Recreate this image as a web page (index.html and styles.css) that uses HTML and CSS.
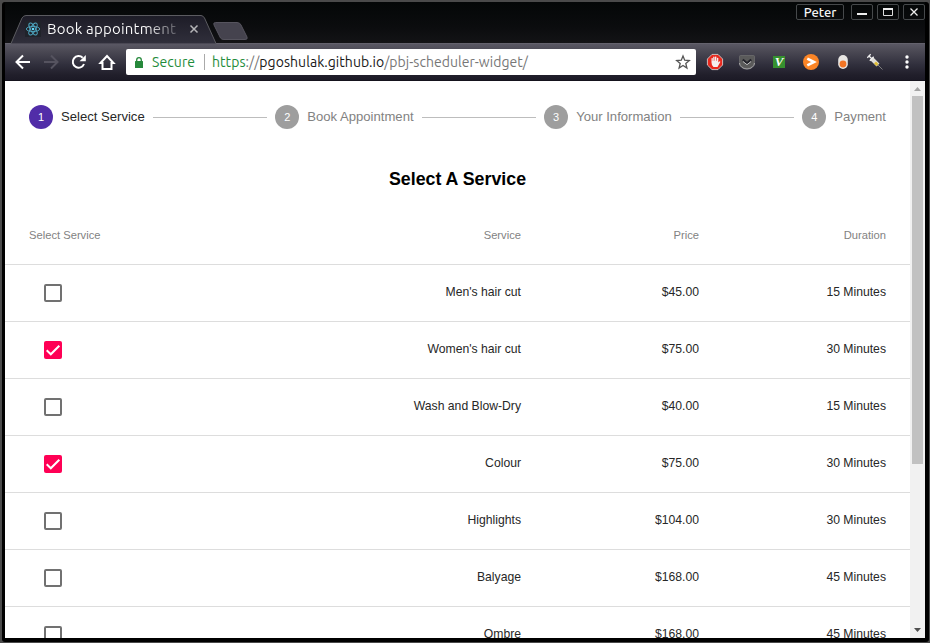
FILE: index.html
```html
<!DOCTYPE html>
<html lang="en">
<head>
<meta charset="utf-8">
<title>Book appointment</title>
<link rel="stylesheet" href="styles.css">
</head>
<body>
<div class="window">
  <header class="titlebar">
    <div class="tab">
      <svg class="tab-shape" width="240" height="29" viewBox="0 0 240 29"><defs><linearGradient id="tabfill" x1="0" y1="0" x2="0" y2="1"><stop offset="0" stop-color="#1d1c27"/><stop offset="1" stop-color="#302f3b"/></linearGradient></defs><path d="M5 28.500L16 3Q17.500 .5 20 .5H195Q197 .5 198.500 3L210 28.500" fill="url(#tabfill)" stroke="#5b5b60"/><path d="M209.500 7.500H231Q234 7.500 235 10L241 22Q242 24.500 239 24.500H218Q215.500 24.500 214.500 23L208 10Q207 7.500 209.500 7.500Z" fill="#45434e" stroke="#56545e"/></svg>
      <svg class="react" width="16" height="16" viewBox="0 0 16 16"><rect width="16" height="16" fill="#20232a"/><g fill="none" stroke="#4fa9c4" stroke-width=".9"><ellipse cx="8" cy="8" rx="6.700" ry="2.600"/><ellipse cx="8" cy="8" rx="6.700" ry="2.600" transform="rotate(60 8 8)"/><ellipse cx="8" cy="8" rx="6.700" ry="2.600" transform="rotate(120 8 8)"/></g><circle cx="8" cy="8" r="1.300" fill="#61dafb"/></svg>
      <span class="tab-title">Book appointment</span>
      <svg class="tab-close" width="8" height="8" viewBox="0 0 8 8"><path d="M.5.5l7 7M7.500.5l-7 7" stroke="#b5b5b8" stroke-width="1.500"/></svg>
    </div>
    <div class="controls">
      <span class="user">Peter</span>
      <span class="control"><svg width="20" height="14" viewBox="0 0 20 14"><path d="M5 9h10" stroke="#eee" stroke-width="2"/></svg></span>
      <span class="control"><svg width="20" height="14" viewBox="0 0 20 14"><path d="M5.500 4v6.500h9V4z" fill="none" stroke="#ddd"/><path d="M5 4h10" stroke="#eee" stroke-width="2"/></svg></span>
      <span class="control"><svg width="20" height="14" viewBox="0 0 20 14"><path d="M6.500 3.500l7 7M13.500 3.500l-7 7" stroke="#eee" stroke-width="1.300"/></svg></span>
    </div>
  </header>
  <nav class="toolbar">
    <svg class="nav-icons" width="121" height="38" viewBox="0 0 121 38" fill="none" stroke="#fff" stroke-width="2"><path d="M25 19H12.500M18 12.500L11.500 19L18 25.500"/><path stroke="#55535f" d="M39 19H51.500M46 12.500L52.500 19L46 25.500"/><path d="M79 21a5.800 5.800 0 1 1-1.300-6.200"/><path d="M80.800 12v6.200h-6.200z" fill="#fff" stroke="none"/><path d="M95.500 20L102 13L108.500 20H106.500V26H97.500V20Z"/></svg>
    <div class="address">
      <svg class="lock" width="8" height="11" viewBox="0 0 8 11"><rect y="4" width="8" height="7" rx=".5" fill="#26883b"/><path d="M1.700 5V3a2.300 2.300 0 0 1 4.600 0v2" fill="none" stroke="#26883b" stroke-width="1.300"/></svg>
      <span class="secure">Secure</span>
      <span class="url"><span class="scheme">https</span><span class="slashes">://</span><span class="host">pgoshulak.github.io</span>/pbj-scheduler-widget/</span>
      <svg class="star" width="14" height="14" viewBox="0 0 14 14"><path d="M7 1l1.700 4.200 4.600.3-3.500 3 1.100 4.500L7 10.500l-3.900 2.500 1.100-4.500-3.500-3 4.600-.3z" fill="none" stroke="#555" stroke-width="1.300"/></svg>
    </div>
    <div class="extensions">
      <svg width="16" height="16" viewBox="0 0 16 16"><path d="M5 .4h6L15.600 5v6L11 15.600H5L.4 11V5z" fill="#e8281d" stroke="#ddd" stroke-width=".8"/><path d="M4.500 8.500V4.300q.7-.8 1.300 0V7h.4V3q.7-.8 1.400 0v3.700H8V2.800q.8-.7 1.400 0v4H10V4q.7-.7 1.300 0v4.500l1-1q1-.4 1 .4L10.500 13H6.500q-2-1.500-2-4.500z" fill="#f4eeee"/></svg>
      <svg width="16" height="16" viewBox="0 0 16 16"><path d="M.5 2.500q0-1 1-1h13q1 0 1 1V8a7.500 6.500 0 0 1-15 0z" fill="#5a5a5a" stroke="#777" stroke-width=".6"/><path d="M.5 9a7.500 6 0 0 0 15 0" fill="none" stroke="#aaa"/><path d="M3.800 5.500l4.200 3.800 4.200-3.800" fill="none" stroke="#24242b" stroke-width="2.200"/><path d="M4 7.500l4 3.200 4-3.200" fill="none" stroke="#ccc" stroke-width=".9"/></svg>
      <svg width="16" height="16" viewBox="0 0 16 16"><rect x="2" y="2" width="12" height="12" fill="#36912f"/><text x="8.200" y="12" text-anchor="middle" class="vletter">V</text></svg>
      <svg width="16" height="16" viewBox="0 0 16 16"><circle cx="8" cy="8" r="8" fill="#fb8526"/><path d="M4.300 4.600L11 8l-6.700 3.400" fill="none" stroke="#fff" stroke-width="2.600"/></svg>
      <svg width="16" height="16" viewBox="0 0 16 16"><rect x="3.200" y="1" width="9.600" height="14" rx="4.800" fill="#e8e6e3"/><circle cx="8" cy="10" r="3.400" fill="#f27525"/></svg>
      <svg width="16" height="16" viewBox="0 0 16 16"><path d="M10.500 10.500l5 5" stroke="#888" stroke-width=".9"/><path d="M4.500 4.500l6.500 6.500" stroke="#deddd9" stroke-width="4"/><path d="M8 8.500l2.500 2.500" stroke="#dfbd35" stroke-width="2.800"/><path d="M1.500 1.500l3 3M.3 3.700L3.700.3M2.800 6.700L6.700 2.800" stroke="#f1f1f1" stroke-width="1.300"/></svg>
      <svg width="16" height="16" viewBox="0 0 16 16" fill="#fff"><circle cx="8" cy="3" r="1.700"/><circle cx="8" cy="8" r="1.700"/><circle cx="8" cy="13" r="1.700"/></svg>
    </div>
  </nav>
  <div class="viewport">
    <main class="page">
      <div class="stepper">
        <div class="step active"><span class="num">1</span><span>Select Service</span></div><i></i>
        <div class="step"><span class="num">2</span><span>Book Appointment</span></div><i></i>
        <div class="step"><span class="num">3</span><span>Your Information</span></div><i></i>
        <div class="step"><span class="num">4</span><span>Payment</span></div>
      </div>
      <h1>Select A Service</h1>
      <div class="table">
        <div class="row head"><span>Select Service</span><span>Service</span><span>Price</span><span>Duration</span></div>
        <div class="row"><span class="box"></span><span>Men's hair cut</span><span>$45.00</span><span>15 Minutes</span></div>
        <div class="row"><span class="box checked"><svg width="18" height="18" viewBox="0 0 18 18"><path d="M2.700 9.300L6.800 13.300L15.300 4.700" fill="none" stroke="#fff" stroke-width="2"/></svg></span><span>Women's hair cut</span><span>$75.00</span><span>30 Minutes</span></div>
        <div class="row"><span class="box"></span><span>Wash and Blow-Dry</span><span>$40.00</span><span>15 Minutes</span></div>
        <div class="row"><span class="box checked"><svg width="18" height="18" viewBox="0 0 18 18"><path d="M2.700 9.300L6.800 13.300L15.300 4.700" fill="none" stroke="#fff" stroke-width="2"/></svg></span><span>Colour</span><span>$75.00</span><span>30 Minutes</span></div>
        <div class="row"><span class="box"></span><span>Highlights</span><span>$104.00</span><span>30 Minutes</span></div>
        <div class="row"><span class="box"></span><span>Balyage</span><span>$168.00</span><span>45 Minutes</span></div>
        <div class="row"><span class="box"></span><span>Ombre</span><span>$168.00</span><span>45 Minutes</span></div>
      </div>
    </main>
    <div class="scrollbar">
      <svg width="15" height="15" viewBox="0 0 15 15"><path d="M4 10L7.500 6L11 10z" fill="#a3a3a3"/></svg>
      <div class="thumb"></div>
      <svg class="down" width="15" height="15" viewBox="0 0 15 15"><path d="M4 5L7.500 9L11 5z" fill="#505050"/></svg>
    </div>
  </div>
</div>
</body>
</html>
```
FILE: styles.css
```css
* { box-sizing: border-box; }
body { margin: 0; width: 930px; height: 643px; overflow: hidden; background: #4a4a4a; }
svg { display: block; flex: none; overflow: visible; }
.window { width: 927px; height: 640px; margin: 2px 0 0 2px; padding: 0 4px 4px 3px; background: #000; border-radius: 3px; display: flex; flex-direction: column; overflow: hidden; }
.titlebar { height: 41px; flex: none; display: flex; justify-content: space-between; background: linear-gradient(#040707, #0b0c0e 60%, #131316); }
.tab { position: relative; width: 250px; display: flex; align-items: center; padding: 13px 0 0 20px; }
.tab-shape { position: absolute; left: 1px; top: 13px; }
.react, .tab-title, .tab-close { position: relative; }
.tab-title { font: 15px/20px Ubuntu, "Noto Sans", sans-serif; width: 132px; margin-left: 6px; letter-spacing: .2px; white-space: nowrap; color: transparent; background: linear-gradient(90deg, #fff 75%, #ffffff30 100%); background-clip: text; -webkit-background-clip: text; }
.tab-close { margin-left: 11px; }
.controls { display: flex; gap: 4px; padding: 2px 0; }
.control, .user { height: 16px; border: 1px solid #46494b; border-radius: 2px; }
.control { width: 22px; }
.user { width: 48px; margin-right: 3px; text-align: center; color: #f5f5f5; font: 500 13px/15px Ubuntu, "Noto Sans", sans-serif; }
.toolbar { height: 38px; flex: none; display: flex; align-items: center; background: linear-gradient(#5a5864, #4b4954 20%, #302f3c 58%, #211f2b 85%, #1c1a26); border-top: 1px solid #64626d; border-bottom: 1px solid #15131d; }
.address { width: 570px; height: 26px; background: #fff; border-radius: 2px; display: flex; align-items: center; padding: 0 6px 0 9px; font: 14px/24px Ubuntu, "Noto Sans", sans-serif; }
.secure { color: #1f8c3b; width: 45px; margin-left: 9px; white-space: nowrap; letter-spacing: .1px; }
.url { margin-left: 7px; padding-left: 7px; height: 16px; line-height: 17px; letter-spacing: .05px; border-left: 1px solid #aaa; color: #777; white-space: nowrap; }
.scheme { color: #1f8c3b; }
.host { color: #171717; }
.star { margin-left: auto; }
.extensions { display: flex; gap: 16px; margin-left: 11px; }
.vletter { font: italic bold 13px "Liberation Serif", serif; fill: #fff; }
.viewport { flex: 1; min-height: 0; display: flex; background: #fff; overflow: hidden; }
.page { width: 905px; flex: none; font-family: "Liberation Sans", sans-serif; }
.stepper { display: flex; align-items: center; height: 72px; padding: 0 24px; font-size: 13.1px; color: #828282; }
.stepper i { flex: 1; height: 1px; background: #bdbdbd; margin: 1px 8px 0; }
.step { display: flex; align-items: center; gap: 8px; white-space: nowrap; }
.step span:last-child { position: relative; top: -.5px; }
.num { width: 24px; height: 24px; border-radius: 50%; background: #9e9e9e; color: #fff; font-size: 11px; line-height: 25px; text-align: center; }
.active { color: #272727; }
.active .num { background: #512da8; }
h1 { margin: 14px 0 17px; font-size: 17.8px; line-height: 24px; text-align: center; color: #000; }
.row { height: 57px; display: grid; grid-template-columns: 320px 172px 178px 187px; align-items: center; padding-left: 24px; border-bottom: 1px solid #ddd; font-size: 12.2px; line-height: 18px; text-align: right; color: #272727; }
.row > span:not(.box) { position: relative; top: -1px; }
.head { font-size: 11.2px; color: #828282; }
.head > span:first-child { text-align: left; }
.box { width: 18px; height: 18px; margin-left: 15px; border: 2px solid #717171; border-radius: 2px; }
.box.checked { border: 0; background: #ff0055; }
.scrollbar { width: 15px; background: #f1f1f1; display: flex; flex-direction: column; align-items: center; }
.thumb { width: 11px; height: 368px; background: #c1c1c1; }
.down { margin-top: auto; }
```
